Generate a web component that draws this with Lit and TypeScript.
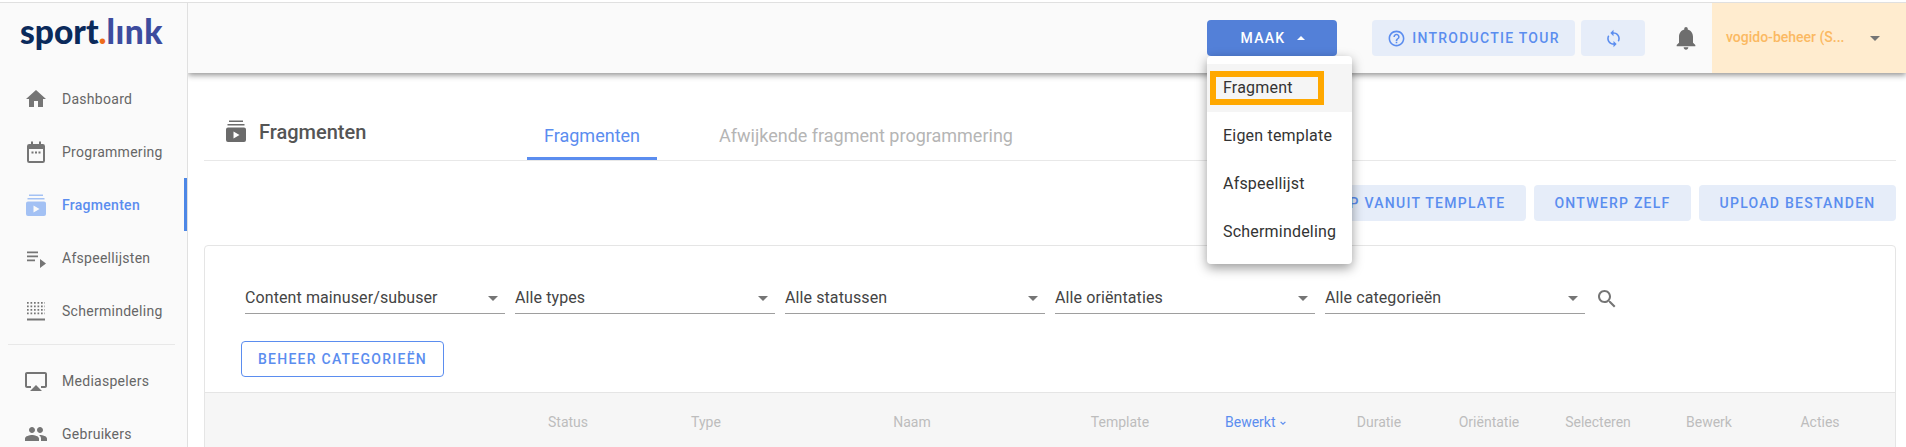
import { LitElement, html, css, svg } from "lit";
import { customElement } from "lit/decorators.js";

const fragIcon = svg`<path d="M5 1.500h14v1.600H5zM3.500 5h17v1.600h-17zM4 8.500h16a2 2 0 0 1 2 2V21a2 2 0 0 1-2 2H4a2 2 0 0 1-2-2V10.500a2 2 0 0 1 2-2zM9.500 12.500v7l6-3.500z" fill-rule="evenodd"/>`;

const navIcons: Record<string, unknown> = {
  home: svg`<path d="M10 20v-6h4v6h5v-8h3L12 3 2 12h3v8z"/>`,
  event: svg`<path d="M7 1.500h2V4h6V1.500h2V4h1.800A2.200 2.200 0 0 1 21 6.200v14.600a2.200 2.200 0 0 1-2.200 2.200H5.200A2.200 2.200 0 0 1 3 20.800V6.200A2.200 2.200 0 0 1 5.200 4H7zM5 9v12h14V9zM7.500 11.500h2v2h-2zM11 11.500h2v2h-2zM14.500 11.500h2v2h-2z" fill-rule="evenodd"/>`,
  frag: fragIcon,
  list: svg`<path d="M3 5.500h11v1.800H3zM3 9.500h11v1.800H3zM3 13.500h8v1.800H3zM16 13l6 4.500-6 4.500z"/>`,
  grid: svg`<path d="M3 19.500h18v2H3z"/><path d="M3 3.800h18M3 7.300h18M3 10.800h18M3 14.300h18" fill="none" stroke="#757575" stroke-width="1.700" stroke-dasharray="1.700 1.800"/>`,
  airplay: svg`<path d="M6 22h12l-6-6zM21 3H3c-1.100 0-2 .9-2 2v12c0 1.100.9 2 2 2h4v-2H3V5h18v12h-4v2h4c1.100 0 2-.9 2-2V5c0-1.100-.9-2-2-2z"/>`,
  people: svg`<path d="M16 11c1.660 0 2.990-1.340 2.990-3S17.660 5 16 5c-1.660 0-3 1.340-3 3s1.340 3 3 3zm-8 0c1.660 0 2.990-1.340 2.990-3S9.660 5 8 5C6.340 5 5 6.340 5 8s1.340 3 3 3zm0 2c-2.330 0-7 1.170-7 3.500V19h14v-2.500c0-2.330-4.670-3.500-7-3.500zm8 0c-.29 0-.62.02-.97.05 1.160.84 1.970 1.970 1.970 3.450V19h6v-2.500c0-2.330-4.670-3.500-7-3.500z"/>`,
};

const navTop = [
  ["home", "Dashboard"],
  ["event", "Programmering"],
  ["frag", "Fragmenten"],
  ["list", "Afspeellijsten"],
  ["grid", "Schermindeling"],
];
const navBottom = [
  ["airplay", "Mediaspelers"],
  ["people", "Gebruikers"],
];
const filters = ["Content mainuser/subuser", "Alle types", "Alle statussen", "Alle oriëntaties", "Alle categorieën"];
const columns = ["Status", "Type", "Naam", "Template", "Bewerkt", "Duratie", "Oriëntatie", "Selecteren", "Bewerk", "Acties"];
const menuItems = ["Fragment", "Eigen template", "Afspeellijst", "Schermindeling"];

@customElement("app-root")
export class AppRoot extends LitElement {
  static styles = css`
    :host {
      display: block;
      height: 447px;
      overflow: hidden;
      background: #fff;
      font-family: Roboto, "Liberation Sans", sans-serif;
      color: #444;
    }
    .app {
      display: flex;
      height: 445px;
      margin-top: 2px;
      border-top: 1px solid #e0e0e0;
      box-sizing: border-box;
      overflow: hidden;
    }
    .side {
      flex: 0 0 188px;
      box-sizing: border-box;
      background: #fafafa;
      border-right: 1px solid #e0e0e0;
      overflow: hidden;
    }
    .logo {
      height: 58px;
      padding: 8px 0 0 20px;
      box-sizing: border-box;
      font-family: Lato, sans-serif;
      font-weight: 900;
      font-size: 33.500px;
      line-height: 40px;
      color: #0b2a5b;
      white-space: nowrap;
    }
    .logo .dot { color: #ee6c1a; }
    .logo .link { color: #3d4c9e; letter-spacing: 0.5px; }
    .nav {
      display: flex;
      align-items: center;
      height: 53px;
      padding-left: 24px;
      box-sizing: border-box;
      font-size: 14px;
      letter-spacing: 0.28px;
      color: #666;
    }
    .nav svg { width: 24px; height: 24px; fill: #757575; margin-right: 14px; flex: none; }
    .nav.active {
      color: #5b8def;
      font-weight: 500;
      border-right: 3px solid #4d87e6;
    }
    .nav.active svg { fill: #a3c1f4; }
    .first { margin-top: 11px; }
    .sep { height: 1px; background: #e8e8e8; margin: 7px 12px 9px 8px; }
    .main { flex: 1; min-width: 0; position: relative; overflow: hidden; }
    .top {
      height: 70px;
      background: #fafafa;
      box-shadow: 0 2px 6px rgba(0, 0, 0, 0.45);
      display: flex;
      align-items: flex-start;
      position: relative;
    }
    .btn {
      display: inline-flex;
      align-items: center;
      justify-content: center;
      height: 36px;
      box-sizing: border-box;
      border-radius: 4px;
      font-size: 14px;
      font-weight: 500;
      letter-spacing: 1.250px;
      white-space: nowrap;
      background: #e6edf9;
      color: #5b8def;
    }
    .top .btn { margin-top: 17px; }
    .maak {
      width: 130px;
      background: #5380d8;
      color: #fff;
      margin-left: 1019px;
      padding-left: 2px;
    }
    .maak i {
      width: 0;
      height: 0;
      border: 4px solid transparent;
      border-top: 0;
      border-bottom-color: #fff;
      margin-left: 12px;
    }
    .intro { width: 203px; margin-left: 35px; }
    .intro svg { width: 19px; height: 19px; fill: #5b8def; margin-right: 6px; }
    .sync { width: 64px; margin-left: 6px; }
    .sync svg { width: 19px; height: 19px; fill: #5b8def; }
    .bell { width: 28px; height: 28px; fill: #6e6e6e; margin: 21px 0 0 27px; flex: none; }
    .user {
      flex: 1;
      margin-left: 12px;
      height: 70px;
      background: #ffeccf;
      color: #fbb962;
      font-size: 14px;
      font-weight: 500;
      display: flex;
      align-items: center;
      padding: 0 26px 2px 14px;
      box-sizing: border-box;
      justify-content: space-between;
    }
    .user i, .sel i {
      width: 0;
      height: 0;
      border: 5px solid transparent;
      border-bottom: 0;
      border-top-color: #757575;
    }
    .user i { margin-top: 3px; }
    .menu {
      position: absolute;
      left: 1019px;
      top: 53px;
      width: 145px;
      height: 208px;
      padding-top: 8px;
      box-sizing: border-box;
      background: #fff;
      border-radius: 4px;
      box-shadow: 0 4px 12px rgba(0, 0, 0, 0.4);
      z-index: 5;
      font-size: 16px;
      letter-spacing: 0.2px;
      color: #333;
    }
    .item {
      height: 48px;
      display: flex;
      align-items: center;
      padding: 0 0 2px 16px;
      box-sizing: border-box;
      white-space: nowrap;
    }
    .item.on { background: #f5f5f5; position: relative; }
    .mark {
      position: absolute;
      left: 3px;
      top: 7px;
      width: 114px;
      height: 34px;
      box-sizing: border-box;
      border: 6px solid #ffa800;
    }
    .content { padding: 0 10px 0 16px; }
    .head {
      height: 88px;
      box-sizing: border-box;
      display: flex;
      border-bottom: 1px solid #e8e8e8;
    }
    .title {
      display: flex;
      align-items: center;
      width: 323px;
      box-sizing: border-box;
      padding: 37px 0 0 20px;
      height: 80px;
      font-size: 20px;
      font-weight: 500;
      color: #555;
    }
    .title svg { width: 24px; height: 24px; fill: #6b6b6b; margin: -2px 11px 0 0; }
    .tab {
      padding: 0 17px;
      height: 87px;
      box-sizing: border-box;
      padding-top: 52px;
      font-size: 18px;
      line-height: 22px;
      color: #b5b5b5;
      border-bottom: 3px solid transparent;
      margin-bottom: -1px;
      white-space: nowrap;
    }
    .tab.on { color: #5b8def; border-bottom-color: #5b8def; margin-right: 45px; }
    .actions {
      display: flex;
      justify-content: flex-end;
      gap: 8px;
      padding: 24px 0;
    }
    .actions .btn { padding: 0 20.500px; }
    .card {
      border: 1px solid #e5e5e5;
      border-radius: 4px 4px 0 0;
      height: 220px;
      box-sizing: border-box;
    }
    .filters {
      display: flex;
      gap: 10px;
      padding: 38px 0 0 40px;
      align-items: center;
    }
    .sel {
      width: 260px;
      height: 30px;
      box-sizing: border-box;
      border-bottom: 1px solid #9e9e9e;
      display: flex;
      align-items: center;
      justify-content: space-between;
      padding: 0 7px 2px 0;
      font-size: 16px;
      letter-spacing: 0.1px;
      color: #444;
    }
    .sel i { margin-top: 1px; }
    .search { width: 24px; height: 24px; fill: #757575; }
    .outline {
      margin: 27px 0 0 36px;
      width: 203px;
      background: #fff;
      border: 1px solid #5b8def;
    }
    .thead {
      margin-top: 15px;
      border-top: 1px solid #e5e5e5;
      background: #f6f6f6;
      height: 80px;
      display: grid;
      grid-template-columns: 138px 138px 274px 142px 130px 116px 104px 114px 108px 114px;
      padding-left: 294px;
      font-size: 14px;
      color: #bdbdbd;
    }
    .th { text-align: center; padding-top: 21px; line-height: 17px; white-space: nowrap; }
    .th.on { color: #5b8def; }
    .th.on svg { width: 8px; height: 8px; fill: none; stroke: #5b8def; stroke-width: 1.500; }
  `;

  private nav(n: string[]) {
    const active = n[1] === "Fragmenten";
    return html`<div class="nav ${active ? "active" : ""}">
      <svg viewBox="0 0 24 24">${navIcons[n[0]]}</svg><span>${n[1]}</span>
    </div>`;
  }

  render() {
    return html`<div class="app">
      <aside class="side">
        <div class="logo">sport<span class="dot">.</span><span class="link">lınk</span></div>
        <div class="first">${navTop.map((n) => this.nav(n))}</div>
        <div class="sep"></div>
        ${navBottom.map((n) => this.nav(n))}
      </aside>
      <div class="main">
        <header class="top">
          <div class="btn maak">MAAK<i></i></div>
          <div class="btn intro">
            <svg viewBox="0 0 24 24"><path d="M11 18h2v-2h-2v2zm1-16C6.480 2 2 6.480 2 12s4.480 10 10 10 10-4.480 10-10S17.520 2 12 2zm0 18c-4.410 0-8-3.590-8-8s3.590-8 8-8 8 3.590 8 8-3.590 8-8 8zm0-14c-2.210 0-4 1.790-4 4h2c0-1.100.9-2 2-2s2 .9 2 2c0 2-3 1.750-3 5h2c0-2.250 3-2.500 3-5 0-2.210-1.790-4-4-4z"/></svg>
            INTRODUCTIE TOUR
          </div>
          <div class="btn sync">
            <svg viewBox="0 0 24 24"><path d="M12 4V1L8 5l4 4V6c3.310 0 6 2.690 6 6 0 1.010-.25 1.970-.7 2.800l1.460 1.460C19.540 15.030 20 13.570 20 12c0-4.420-3.580-8-8-8zm0 14c-3.310 0-6-2.690-6-6 0-1.010.25-1.970.7-2.800L5.240 7.740C4.460 8.970 4 10.430 4 12c0 4.420 3.580 8 8 8v3l4-4-4-4v3z"/></svg>
          </div>
          <svg class="bell" viewBox="0 0 24 24"><path d="M12 22c1.100 0 2-.9 2-2h-4c0 1.100.89 2 2 2zm6-6v-5c0-3.070-1.640-5.640-4.500-6.320V4c0-.83-.67-1.500-1.500-1.500s-1.500.67-1.500 1.500v.68C7.630 5.360 6 7.920 6 11v5l-2 2v1h16v-1l-2-2z"/></svg>
          <div class="user"><span>vogido-beheer (S...</span><i></i></div>
        </header>
        <div class="menu">
          ${menuItems.map(
            (m, i) => html`<div class="item ${i === 0 ? "on" : ""}">${m}${i === 0 ? html`<div class="mark"></div>` : ""}</div>`
          )}
        </div>
        <div class="content">
          <div class="head">
            <div class="title"><svg viewBox="0 0 24 24">${fragIcon}</svg>Fragmenten</div>
            <div class="tab on">Fragmenten</div>
            <div class="tab">Afwijkende fragment programmering</div>
          </div>
          <div class="actions">
            <div class="btn">ONTWERP VANUIT TEMPLATE</div>
            <div class="btn">ONTWERP ZELF</div>
            <div class="btn">UPLOAD BESTANDEN</div>
          </div>
          <section class="card">
            <div class="filters">
              ${filters.map((f) => html`<div class="sel"><span>${f}</span><i></i></div>`)}
              <svg class="search" viewBox="0 0 24 24"><path d="M15.500 14h-.79l-.28-.27C15.410 12.590 16 11.110 16 9.500 16 5.910 13.090 3 9.500 3S3 5.910 3 9.500 5.910 16 9.500 16c1.610 0 3.090-.59 4.230-1.570l.27.28v.79l5 4.990L20.490 19l-4.990-5zm-6 0C7.010 14 5 11.990 5 9.500S7.010 5 9.500 5 14 7.010 14 9.500 11.990 14 9.500 14z"/></svg>
            </div>
            <div class="btn outline">BEHEER CATEGORIEËN</div>
            <div class="thead">
              ${columns.map((c) =>
                c === "Bewerkt"
                  ? html`<div class="th on">${c} <svg viewBox="0 0 10 10"><path d="M2 3.500l3 3 3-3"/></svg></div>`
                  : html`<div class="th">${c}</div>`
              )}
            </div>
          </section>
        </div>
      </div>
    </div>`;
  }
}
